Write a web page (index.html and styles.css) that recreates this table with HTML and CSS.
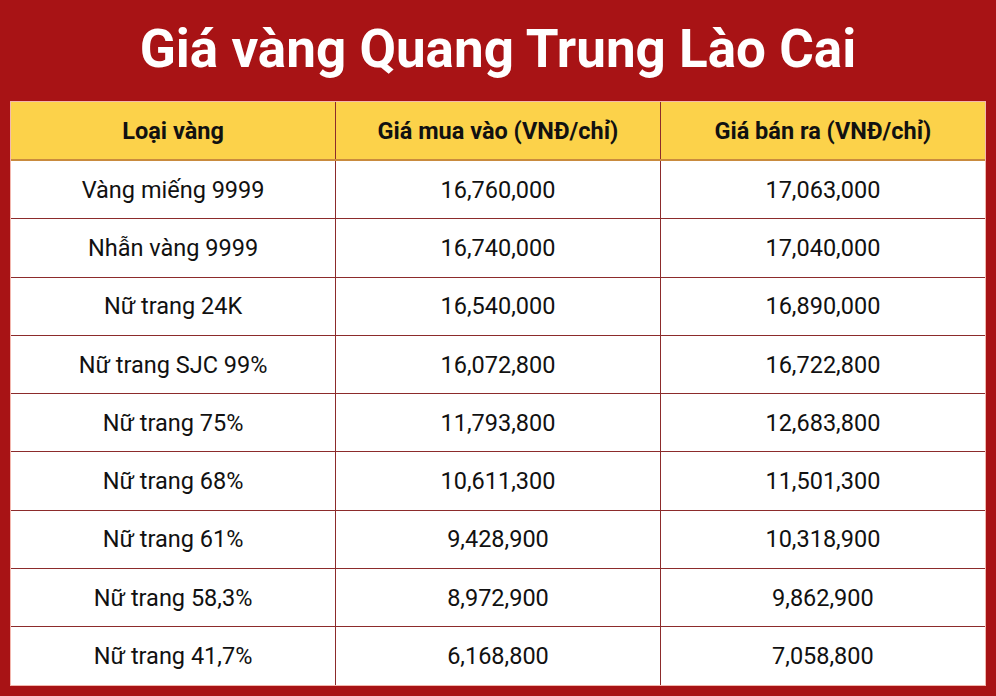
FILE: index.html
```html
<!DOCTYPE html>
<html lang="vi">
<head>
<meta charset="utf-8">
<link rel="stylesheet" href="styles.css">
</head>
<body>
<div class="page">
  <h1 class="title">Giá vàng Quang Trung Lào Cai</h1>
  <table class="prices">
    <thead>
      <tr><th>Loại vàng</th><th>Giá mua vào (VNĐ/chỉ)</th><th>Giá bán ra (VNĐ/chỉ)</th></tr>
    </thead>
    <tbody>
      <tr><td>Vàng miếng 9999</td><td>16,760,000</td><td>17,063,000</td></tr>
      <tr><td>Nhẫn vàng 9999</td><td>16,740,000</td><td>17,040,000</td></tr>
      <tr><td>Nữ trang 24K</td><td>16,540,000</td><td>16,890,000</td></tr>
      <tr><td>Nữ trang SJC 99%</td><td>16,072,800</td><td>16,722,800</td></tr>
      <tr><td>Nữ trang 75%</td><td>11,793,800</td><td>12,683,800</td></tr>
      <tr><td>Nữ trang 68%</td><td>10,611,300</td><td>11,501,300</td></tr>
      <tr><td>Nữ trang 61%</td><td>9,428,900</td><td>10,318,900</td></tr>
      <tr><td>Nữ trang 58,3%</td><td>8,972,900</td><td>9,862,900</td></tr>
      <tr><td>Nữ trang 41,7%</td><td>6,168,800</td><td>7,058,800</td></tr>
    </tbody>
  </table>
</div>
</body>
</html>
```
FILE: styles.css
```css
html, body {
  margin: 0;
  padding: 0;
  background: #a81315;
}
.page {
  width: 996px;
  height: 696px;
  box-sizing: border-box;
  padding: 0 11px;
  font-family: Roboto, "Noto Sans", sans-serif;
}
.title {
  margin: 0;
  height: 102px;
  display: flex;
  align-items: center;
  justify-content: center;
  color: #ffffff;
  font-size: 53px;
  font-weight: 700;
  padding-bottom: 4px;
  box-sizing: border-box;
}
.prices {
  width: 974px;
  border-collapse: collapse;
  table-layout: fixed;
  background: #ffffff;
  outline: 1px solid #f3b7ae;
}
.prices th, .prices td {
  text-align: center;
  vertical-align: middle;
  border: 1px solid #8c2b2b;
  padding: 0;
}
.prices tr > :first-child { border-left: none; }
.prices tr > :last-child { border-right: none; }
.prices thead th {
  background: #fcd24a;
  color: #111111;
  font-weight: 700;
  font-size: 23.5px;
  height: 57px;
  border-top: none;
  border-bottom: 2px solid #c98b3e;
}
.prices tbody td {
  color: #111111;
  font-size: 23.5px;
  height: 57.3px;
}
.prices tbody tr:last-child td { border-bottom: none; }
```
